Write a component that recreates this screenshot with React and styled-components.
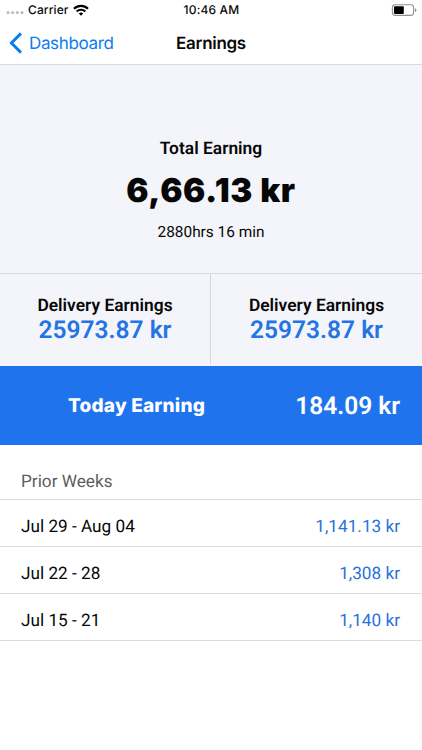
import React from "react";
import styled, { createGlobalStyle } from "styled-components";

const Global = createGlobalStyle`
  * { box-sizing: border-box; }
  body {
    margin: 0;
    background: #fff;
    font-family: Roboto, sans-serif;
    color: #070708;
    text-rendering: geometricPrecision;
  }
`;

const Screen = styled.main`
  width: 422px;
  height: 750px;
  display: flex;
  flex-direction: column;
  background: #fff;
  overflow: hidden;
  white-space: nowrap;
`;

const StatusBar = styled.div`
  height: 20px;
  display: grid;
  grid-template-columns: 1fr auto 1fr;
  align-items: center;
  padding: 0 5px 0 6px;
  font: 500 12px/20px Inter, sans-serif;
`;

const Carrier = styled.div`
  display: flex;
  align-items: center;
  gap: 4px;
`;

const CarrierName = styled.span`
  letter-spacing: 0.1px;
`;

const Clock = styled.span`
  letter-spacing: 0.18px;
`;

const BatterySlot = styled.div`
  display: flex;
  justify-content: flex-end;
`;

const NavBar = styled.header`
  height: 45px;
  display: grid;
  grid-template-columns: 1fr auto 1fr;
  align-items: center;
  padding: 2px 9px 0;
  border-bottom: 1px solid #d8d8dd;
`;

const Back = styled.a`
  display: flex;
  align-items: center;
  gap: 7px;
  color: #0a7cf2;
  font: 400 17px/22px Inter, sans-serif;
  letter-spacing: -0.35px;
`;

const BackText = styled.span`
  padding-top: 1px;
`;

const Title = styled.h1`
  margin: 0;
  padding-top: 1px;
  font: 600 17px/22px Inter, sans-serif;
  letter-spacing: -0.3px;
`;

const Hero = styled.section`
  height: 209px;
  display: flex;
  flex-direction: column;
  align-items: center;
  padding-top: 73px;
  background: #f4f5fa;
  border-bottom: 1px solid #dadade;
`;

const Label = styled.div`
  font-size: 17.4px;
  line-height: 22px;
  font-weight: 600;
`;

const Total = styled.div`
  margin-top: 11px;
  font: 900 33px/38px Inter, sans-serif;
  letter-spacing: 0.6px;
`;

const Duration = styled.div`
  margin-top: 13px;
  font-size: 15.4px;
  line-height: 20px;
`;

const Split = styled.section`
  height: 92px;
  display: grid;
  grid-template-columns: 211px 211px;
  padding-bottom: 2px;
  background: #f4f5fa;
`;

const Cell = styled.div`
  text-align: center;
  padding-top: 21px;
  border-right: ${(p) => (p.$divided ? "1px solid #d6d6dc" : "0")};
`;

const CellAmount = styled.div`
  color: #2474e4;
  font-size: 24.5px;
  line-height: 25px;
  font-weight: 600;
`;

const Today = styled.section`
  height: 79px;
  display: flex;
  align-items: center;
  justify-content: space-between;
  padding: 0 22px 0 68px;
  background: #1f74ee;
  color: #fff;
`;

const TodayLabel = styled.span`
  font: 800 19px/24px Inter, sans-serif;
  letter-spacing: 0.2px;
  padding-top: 1px;
`;

const TodayAmount = styled.span`
  font-size: 24.5px;
  line-height: 30px;
  font-weight: 600;
`;

const ListHeading = styled.h2`
  margin: 0;
  height: 55px;
  padding: 26px 21px 0;
  font-size: 17.2px;
  line-height: 22px;
  font-weight: 400;
  color: #5d5d5f;
  border-bottom: 1px solid #dcdcde;
`;

const Week = styled.div`
  height: 47px;
  display: flex;
  align-items: center;
  justify-content: space-between;
  padding: 7px 22px 0 21px;
  font-size: 17.2px;
  line-height: 22px;
  border-bottom: 1px solid #dcdcde;
`;

const WeekAmount = styled.span`
  color: #2a72dc;
`;

const weeks = [
  ["Jul 29 - Aug 04", "1,141.13 kr"],
  ["Jul 22 - 28", "1,308 kr"],
  ["Jul 15 - 21", "1,140 kr"],
];

const SignalDots = () => (
  <svg width="18" height="8" viewBox="0 0 18 8" fill="#bdbdbd">
    {[2, 6.7, 11.3, 16].map((x) => (
      <circle key={x} cx={x} cy="6.6" r="1.6" />
    ))}
  </svg>
);

const Wifi = () => (
  <svg width="16" height="12" viewBox="0 0 16 12" fill="none" stroke="#000" strokeWidth="2.1">
    <path d="M1 4.7a10 10 0 0 1 14 0" />
    <path d="M3.7 7.5a6.1 6.1 0 0 1 8.6 0" />
    <path d="M8 11.8 5.8 9.6a3.1 3.1 0 0 1 4.4 0z" fill="#000" stroke="none" />
  </svg>
);

const Battery = () => (
  <svg width="26" height="12" viewBox="0 0 26 12">
    <rect x="1.4" y="0.8" width="21.2" height="10.6" rx="2.8" fill="#fff" stroke="#929292" strokeWidth="1.1" />
    <rect x="3" y="2.3" width="9.8" height="7.6" rx="1" fill="#000" />
    <path d="M23.9 4.2c2 .5 2 3.3 0 3.8z" fill="#929292" />
  </svg>
);

const Chevron = () => (
  <svg width="13" height="22" viewBox="0 0 13 22" fill="none" stroke="#0a7cf2" strokeWidth="2.9">
    <path d="M12 1.4 2.4 11 12 20.6" />
  </svg>
);

export default function App() {
  return (
    <>
      <Global />
      <Screen>
        <StatusBar>
          <Carrier>
            <SignalDots />
            <CarrierName>Carrier</CarrierName>
            <Wifi />
          </Carrier>
          <Clock>10:46 AM</Clock>
          <BatterySlot>
            <Battery />
          </BatterySlot>
        </StatusBar>
        <NavBar>
          <Back>
            <Chevron />
            <BackText>Dashboard</BackText>
          </Back>
          <Title>Earnings</Title>
        </NavBar>
        <Hero>
          <Label>Total Earning</Label>
          <Total>6,66.13 kr</Total>
          <Duration>2880hrs 16 min</Duration>
        </Hero>
        <Split>
          <Cell $divided>
            <Label>Delivery Earnings</Label>
            <CellAmount>25973.87 kr</CellAmount>
          </Cell>
          <Cell>
            <Label>Delivery Earnings</Label>
            <CellAmount>25973.87 kr</CellAmount>
          </Cell>
        </Split>
        <Today>
          <TodayLabel>Today Earning</TodayLabel>
          <TodayAmount>184.09 kr</TodayAmount>
        </Today>
        <ListHeading>Prior Weeks</ListHeading>
        {weeks.map(([range, amount]) => (
          <Week key={range}>
            <span>{range}</span>
            <WeekAmount>{amount}</WeekAmount>
          </Week>
        ))}
      </Screen>
    </>
  );
}
